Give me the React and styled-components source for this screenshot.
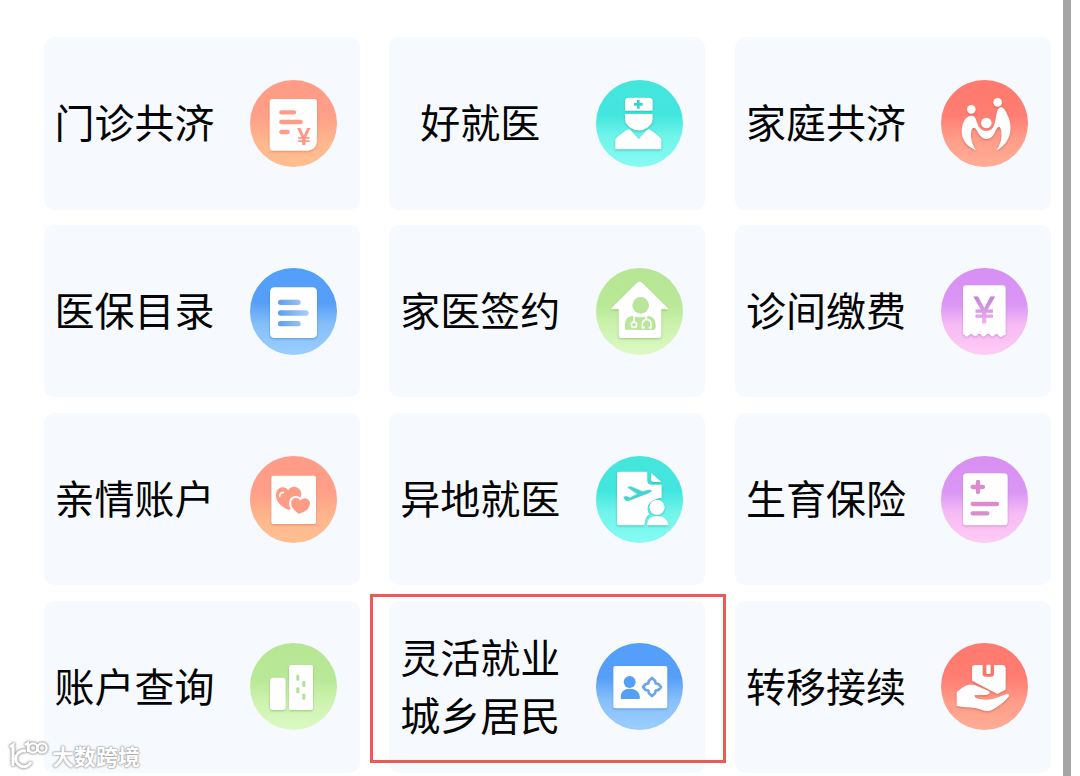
import React from "react";
import styled, { createGlobalStyle } from "styled-components";

const GlobalStyle = createGlobalStyle`
  body { margin: 0; background: #fff; overflow: hidden; }
`;

const Page = styled.div`
  position: relative;
  display: flex;
  justify-content: space-between;
  width: 1080px;
  height: 776px;
  overflow: hidden;
  box-sizing: border-box;
  padding-right: 9px;
  background: #fff;
  font-family: "Noto Sans CJK SC", "Noto Sans", sans-serif;
`;

const Grid = styled.main`
  display: grid;
  grid-template-columns: repeat(3, 316px);
  grid-auto-rows: 172.5px;
  column-gap: 29.8px;
  row-gap: 15.3px;
  padding: 37.2px 0 0 43.5px;
`;

const Scrollbar = styled.div`
  width: 8px;
  height: 776px;
  background: #a5a5a5;
`;

const Card = styled.section`
  position: relative;
  display: flex;
  align-items: center;
  box-sizing: border-box;
  padding-left: 11px;
  border-radius: 10px;
  background: #f6faff;
`;

const Label = styled.span`
  width: 160px;
  margin: 0 35.4px 4px 0;
  font-size: 40px;
  line-height: 58px;
  text-align: center;
  color: #050505;
  white-space: nowrap;
`;

const Disc = styled.div`
  width: 87px;
  height: 87px;
  flex: none;
  border-radius: 50%;
  background: linear-gradient(${(p) => p.$stops});
`;

const Glyph = styled.svg`
  display: block;
  width: 87px;
  height: 87px;
  fill: #fff;
  filter: drop-shadow(0 1.5px 1px ${(p) => p.$shadow});
`;

const Highlight = styled.div`
  position: absolute;
  left: -19.5px;
  top: -7px;
  width: 356px;
  height: 169px;
  box-sizing: border-box;
  border: 3px solid #ed5957;
`;

const Watermark = styled.div`
  position: absolute;
  left: 7px;
  bottom: 5px;
  display: flex;
  align-items: center;
  gap: 4px;
  font-size: 22px;
  line-height: 32px;
  font-weight: 700;
  color: #fff;
  text-shadow: 0 0 2px #999, 0 0 2px #999, 0 0 1px #aaa;
`;

const WatermarkLogo = styled.svg`
  width: 41px;
  height: 32px;
  overflow: visible;
  fill: none;
  stroke: #fff;
  filter: drop-shadow(0 0 1px #999) drop-shadow(0 0 1px #aaa);
`;

const themes = {
  orange: { stops: "#ff9b87 0%, #ff9f88 42%, #ffb78c 72%, #ffbf91 100%", shadow: "#d9704f99" },
  teal: { stops: "#45e5db 0%, #42e6df 40%, #70f4ea 65%, #87fbf3 100%", shadow: "#16a39d99" },
  coral: { stops: "#ff796e 0%, #ff7d72 40%, #ff9d89 68%, #ffad95 100%", shadow: "#c9503f99" },
  blue: { stops: "#529ffa 0%, #569ff8 40%, #86bff9 65%, #9bceff 100%", shadow: "#397fc999" },
  green: { stops: "#b6e694 0%, #b9e896 42%, #ccf2ae 66%, #dcfac4 100%", shadow: "#75ae5999" },
  purple: { stops: "#d78ff3 0%, #db97f4 42%, #f6baf5 65%, #ffcbf4 100%", shadow: "#b46fb899" },
};

const bar = { fill: "none", strokeLinecap: "round" };

const drawings = {
  bill: (
    <>
      <path d="M97 85H223Q231 85 231 93V211Q229 236 205 240H97Q89 240 89 232V93Q89 85 97 85Z" />
      <g {...bar} stroke="#ff9c87" strokeWidth="13">
        <path d="M124 125H162M124 154H182M124 184H143" />
      </g>
      <text x="171" y="222" fontFamily="Liberation Sans, sans-serif" fontWeight="700" fontSize="70" textLength="41" lengthAdjust="spacingAndGlyphs" fill="#ff9985">¥</text>
    </>
  ),
  doctor: (
    <>
      <path d="M120 120V90Q121 81 132 81H190Q202 81 203 90V120Z" />
      <path d="M120 130H203V146Q202 161 187 171Q161 188 136 171Q121 161 120 146Z" />
      <path d="M91 236V206Q93 200 126 177Q132 174 137 179L161 205L185 179Q190 174 195 177Q227 199 229 206V236Z" />
      <path d="M160 88V114M147 101H173" stroke="#36d5ce" strokeWidth="8" />
    </>
  ),
  family: (
    <>
      <circle cx="126" cy="116" r="13" />
      <circle cx="205" cy="95" r="13" />
      <circle cx="171" cy="157" r="16" />
      <path d="M141 239C111 229 92 203 98 169C101 151 111 137 124 135C135 134 139 141 142 153Q150 180 171 181Q192 181 197 155C201 137 201 115 212 110C222 107 229 119 238 141C252 176 241 221 200 240C216 220 219 196 214 175C211 164 203 170 197 184C186 213 158 211 145 184C139 171 132 166 127 178C121 196 128 223 141 239Z" />
    </>
  ),
  list: (
    <>
      <rect x="90" y="86" width="141" height="152" rx="13" />
      <g {...bar} stroke="url(#listInk)" strokeWidth="16">
        <path d="M122 131H174M122 163H198M122 195H174" />
      </g>
      <defs>
        <linearGradient id="listInk" gradientUnits="userSpaceOnUse" x1="114" y1="0" x2="206" y2="0">
          <stop offset="0" stopColor="#5a9eee" />
          <stop offset="1" stopColor="#a9cff8" />
        </linearGradient>
      </defs>
    </>
  ),
  house: (
    <>
      <path d="M155 73Q164 66 173 73L252 152H229V228Q229 238 219 238H111Q101 238 101 228V152H76Z" />
      <circle cx="167" cy="140" r="25" fill="#b9e69a" />
      <path d="M120 213V195Q121 174 143 171Q167 180 190 171Q212 176 212 198V207Q211 214 204 214Z" fill="#b9e69a" />
      <g fill="none" stroke="#fff" strokeWidth="5">
        <path d="M147 171V190M184 171V182M179 207H172V195Q175 182 185 182Q196 182 198 195V207H191" />
        <circle cx="147" cy="198" r="8" />
      </g>
    </>
  ),
  receipt: (
    <>
      <path d="M110 80H220Q229 80 229 89V228Q222 229 218 234Q213 238 207 230Q202 222 196 229Q189 238 183 229Q176 221 169 230Q163 238 157 230Q150 221 144 229Q138 237 131 229Q126 222 119 230Q111 238 107 230L101 227V89Q101 80 110 80Z" />
      <text x="135" y="192" fontFamily="Liberation Sans, sans-serif" fontWeight="400" fontSize="112" textLength="60" lengthAdjust="spacingAndGlyphs" fill="url(#yenInk)" stroke="url(#yenInk)" strokeWidth="3">¥</text>
      <defs>
        <linearGradient id="yenInk" gradientUnits="userSpaceOnUse" x1="0" y1="112" x2="0" y2="195">
          <stop offset="0" stopColor="#bf7fdc" />
          <stop offset="1" stopColor="#efb4ef" />
        </linearGradient>
      </defs>
    </>
  ),
  hearts: (
    <>
      <rect x="94" y="87" width="134" height="145" rx="6" />
      <path d="M147 190C121 180 106 163 108 142C111 120 134 115 145 131C154 114 180 118 184 140C184 160 169 178 147 190Z" fill="#ff9c86" />
      <path d="M119 149Q119 138 130 137" {...bar} stroke="#fff" strokeWidth="5" />
      <path d="M177 205C158 194 148 180 151 165C154 149 174 147 181 157C191 147 211 151 213 169C214 185 199 198 177 205Z" fill="#ff9c86" stroke="#fff" strokeWidth="6" />
    </>
  ),
  travel: (
    <>
      <path d="M104 75H187V102Q187 114 199 114H230V153C207 155 188 169 188 184Q187 195 193 203Q180 211 178 236H104Q96 236 96 228V83Q96 75 104 75Z" />
      <path d="M198 78L229 106H206Q198 106 198 98Z" />
      <circle cx="216" cy="182" r="23" />
      <path d="M185 236Q188 208 216 208Q245 208 252 236Z" />
      <path d="M116 152L123 149L134 154L158 142L128 122L138 120L173 135L193 130Q201 131 199 134Q192 140 177 144L141 158Q129 164 122 161Z" fill="#44d4cf" stroke="#44d4cf" strokeWidth="2" />
    </>
  ),
  policy: (
    <>
      <rect x="101" y="80" width="134" height="156" rx="11" />
      <g {...bar} stroke="#d98dcd">
        <path d="M146 106V136M130 121H161" strokeWidth="13" />
        <path d="M130 172H203M130 200H174" strokeWidth="13" />
      </g>
    </>
  ),
  buildings: (
    <>
      <rect x="90" y="142" width="47" height="97" rx="8" />
      <rect x="147" y="104" width="72" height="135" rx="5" />
      <g fill="#afe19a">
        <rect x="169" y="133" width="9" height="18" rx="3" />
        <rect x="187" y="152" width="9" height="18" rx="3" />
        <rect x="169" y="171" width="9" height="18" rx="3" />
        <rect x="187" y="190" width="9" height="18" rx="3" />
      </g>
    </>
  ),
  idCard: (
    <>
      <rect x="85" y="107" width="162" height="127" rx="6" />
      <g fill="#569ff6">
        <circle cx="134" cy="155" r="18" />
        <path d="M107 202Q107 175 134 175Q163 175 165 202Q165 206 160 206H112Q107 206 107 202Z" />
      </g>
      <path d="M201 143L210 151L212 159L220 161L228 170L220 179L212 181L210 189L201 197L192 189L190 181L182 179L174 170L182 161L190 159L192 151Z" fill="none" stroke="#69a6ef" strokeWidth="8" strokeLinejoin="round" />
    </>
  ),
  transfer: (
    <>
      <path d="M137 104H160V130Q160 139 169 139H185Q194 139 194 130V104H218Q229 104 229 115V178L204 191L128 151V113Q128 104 137 104Z" />
      <rect x="171" y="103" width="13" height="28" rx="3" />
      <path d="M82 186C94 175 105 166 119 163C138 161 151 172 171 179Q181 182 181 188Q180 193 168 194L135 195Q137 204 149 206Q174 211 190 206L233 191Q244 189 237 201Q216 225 188 239Q174 246 158 239C134 230 108 232 82 227Z" />
    </>
  ),
};

const services = [
  { text: "门诊共济", icon: "bill", tone: "orange", view: "30 28" },
  { text: "好就医", icon: "doctor", tone: "teal", view: "33 28" },
  { text: "家庭共济", icon: "family", tone: "coral", view: "35 28" },
  { text: "医保目录", icon: "list", tone: "blue", view: "30 28" },
  { text: "家医签约", icon: "house", tone: "green", view: "33 28" },
  { text: "诊间缴费", icon: "receipt", tone: "purple", view: "35 28" },
  { text: "亲情账户", icon: "hearts", tone: "orange", view: "30 28" },
  { text: "异地就医", icon: "travel", tone: "teal", view: "33 28" },
  { text: "生育保险", icon: "policy", tone: "purple", view: "35 28" },
  { text: "账户查询", icon: "buildings", tone: "green", view: "30 38" },
  { text: "灵活就业\n城乡居民", icon: "idCard", tone: "blue", view: "33 38", marked: true },
  { text: "转移接续", icon: "transfer", tone: "coral", view: "35 38" },
];

function ServiceCard({ text, icon, tone, view, marked }) {
  return (
    <Card>
      <Label>
        {text.split("\n").map((line, i) => (
          <React.Fragment key={line}>
            {i > 0 && <br />}
            {line}
          </React.Fragment>
        ))}
      </Label>
      <Disc $stops={themes[tone].stops}>
        <Glyph viewBox={`${view} 261 261`} $shadow={themes[tone].shadow} aria-hidden="true">
          {drawings[icon]}
        </Glyph>
      </Disc>
      {marked && <Highlight />}
    </Card>
  );
}

export default function App() {
  return (
    <Page>
      <GlobalStyle />
      <Grid>
        {services.map((s) => (
          <ServiceCard key={s.icon} {...s} />
        ))}
      </Grid>
      <Scrollbar />
      <Watermark>
        <WatermarkLogo viewBox="0 0 41 32" aria-hidden="true">
          <path d="M3 8L6 6V27" strokeWidth="3" />
          <path d="M19 12A8 8 0 1 0 24 23" strokeWidth="3" />
          <path d="M18 6L21 4V13" strokeWidth="2.4" />
          <circle cx="26" cy="9" r="4.6" strokeWidth="2.4" />
          <circle cx="35" cy="9" r="4.6" strokeWidth="2.4" />
        </WatermarkLogo>
        大数跨境
      </Watermark>
    </Page>
  );
}
